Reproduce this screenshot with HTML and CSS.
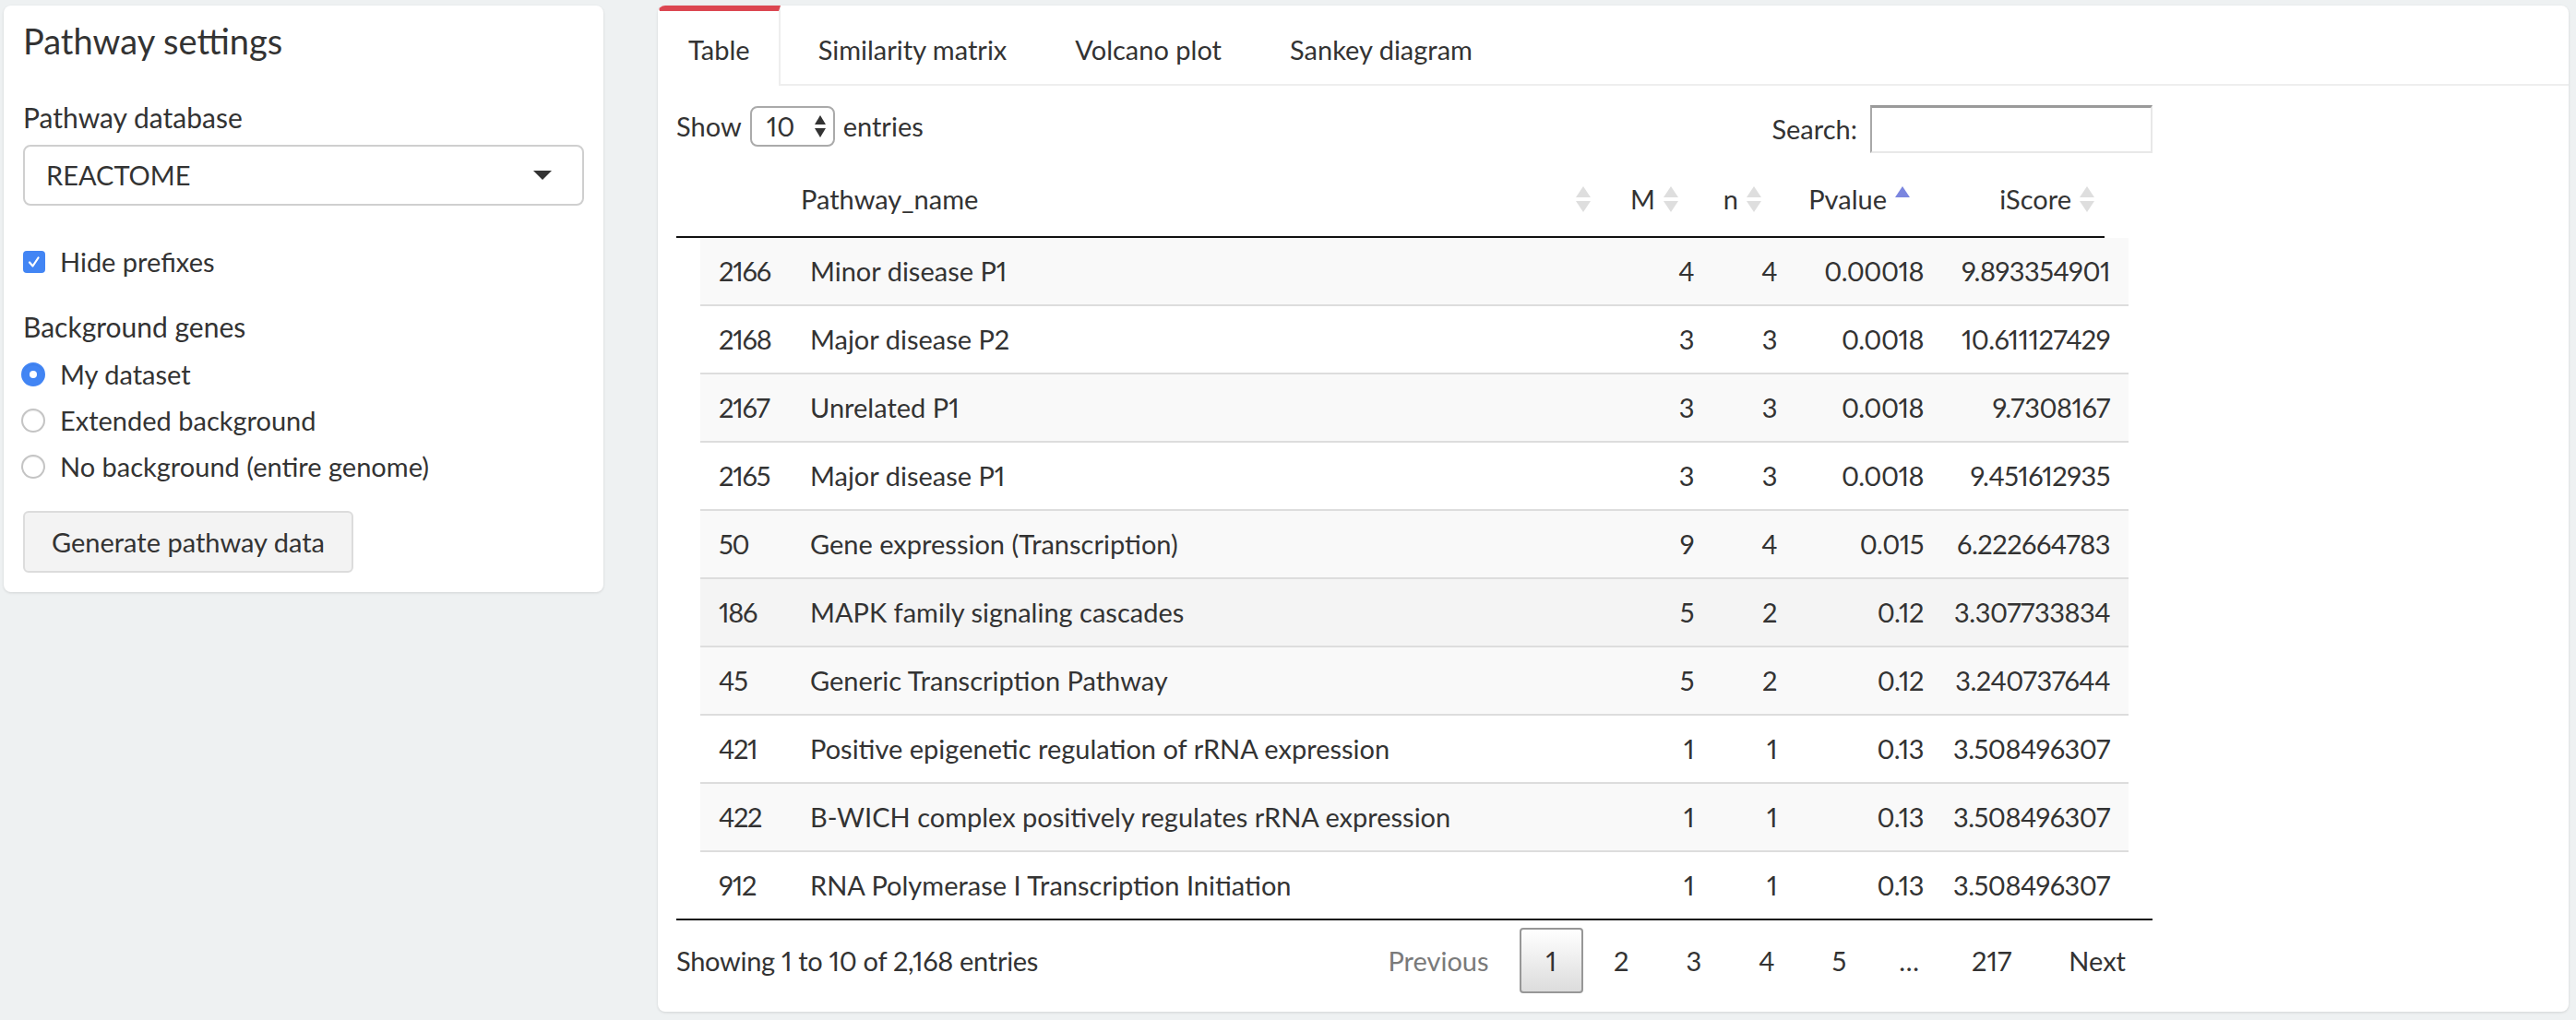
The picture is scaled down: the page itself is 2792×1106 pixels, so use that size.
FILE: index.html
```html
<!DOCTYPE html>
<html lang="en">
<head>
<meta charset="utf-8">
<title>Pathway analysis</title>
<link rel="stylesheet" href="styles.css">
</head>
<body>
<div class="page">
  <aside class="sidebar">
    <h2 class="side-title">Pathway settings</h2>
    <div class="field-label first">Pathway database</div>
    <div class="select-box">
      <span>REACTOME</span>
      <svg class="caret" width="20" height="10" viewBox="0 0 20 10"><polygon points="0,0 20,0 10,10" fill="#333"/></svg>
    </div>
    <div class="check-row">
      <span class="checkbox"><svg width="24" height="24" viewBox="0 0 24 24"><path d="M7 12.5 L10.5 16.5 L16.5 7.5" stroke="#fff" stroke-width="2.2" fill="none" stroke-linecap="round" stroke-linejoin="round"/></svg></span>
      <span>Hide prefixes</span>
    </div>
    <div class="field-label second">Background genes</div>
    <div class="radio-group">
      <div class="radio-row"><span class="radio checked"></span><span>My dataset</span></div>
      <div class="radio-row"><span class="radio"></span><span>Extended background</span></div>
      <div class="radio-row"><span class="radio"></span><span>No background (entire genome)</span></div>
    </div>
    <button class="btn">Generate pathway data</button>
  </aside>

  <main class="main-panel">
    <nav class="tabs">
      <div class="tab active">Table</div>
      <div class="tab">Similarity matrix</div>
      <div class="tab">Volcano plot</div>
      <div class="tab">Sankey diagram</div>
    </nav>
    <div class="tab-content">
      <div class="dt-wrapper">
        <div class="dt-controls">
          <div class="dt-length">
            <span>Show</span>
            <span class="len-select"><span>10</span><svg width="12" height="24" viewBox="0 0 12 24"><polygon points="6,0 12,10 0,10" fill="#333"/><polygon points="0,14 12,14 6,24" fill="#333"/></svg></span>
            <span>entries</span>
          </div>
          <div class="dt-filter">
            <span>Search:</span>
            <span class="search-input"></span>
          </div>
        </div>

        <div class="dt-head">
          <div class="th"></div>
          <div class="th sortable">Pathway_name</div>
          <div class="th num sortable">M</div>
          <div class="th num sortable">n</div>
          <div class="th num sorted-asc">Pvalue</div>
          <div class="th num sortable">iScore</div>
        </div>

        <div class="dt-scroll">
          <div class="dt-body">
            <div class="tr odd"><div class="td id">2166</div><div class="td">Minor disease P1</div><div class="td num">4</div><div class="td num">4</div><div class="td num">0.00018</div><div class="td num">9.893354901</div></div>
            <div class="tr"><div class="td id">2168</div><div class="td">Major disease P2</div><div class="td num">3</div><div class="td num">3</div><div class="td num">0.0018</div><div class="td num">10.611127429</div></div>
            <div class="tr odd"><div class="td id">2167</div><div class="td">Unrelated P1</div><div class="td num">3</div><div class="td num">3</div><div class="td num">0.0018</div><div class="td num">9.7308167</div></div>
            <div class="tr"><div class="td id">2165</div><div class="td">Major disease P1</div><div class="td num">3</div><div class="td num">3</div><div class="td num">0.0018</div><div class="td num">9.451612935</div></div>
            <div class="tr odd"><div class="td id">50</div><div class="td">Gene expression (Transcription)</div><div class="td num">9</div><div class="td num">4</div><div class="td num">0.015</div><div class="td num">6.222664783</div></div>
            <div class="tr hover"><div class="td id">186</div><div class="td">MAPK family signaling cascades</div><div class="td num">5</div><div class="td num">2</div><div class="td num">0.12</div><div class="td num">3.307733834</div></div>
            <div class="tr odd"><div class="td id">45</div><div class="td">Generic Transcription Pathway</div><div class="td num">5</div><div class="td num">2</div><div class="td num">0.12</div><div class="td num">3.240737644</div></div>
            <div class="tr"><div class="td id">421</div><div class="td">Positive epigenetic regulation of rRNA expression</div><div class="td num">1</div><div class="td num">1</div><div class="td num">0.13</div><div class="td num">3.508496307</div></div>
            <div class="tr odd"><div class="td id">422</div><div class="td">B-WICH complex positively regulates rRNA expression</div><div class="td num">1</div><div class="td num">1</div><div class="td num">0.13</div><div class="td num">3.508496307</div></div>
            <div class="tr"><div class="td id">912</div><div class="td">RNA Polymerase I Transcription Initiation</div><div class="td num">1</div><div class="td num">1</div><div class="td num">0.13</div><div class="td num">3.508496307</div></div>
          </div>
        </div>

        <div class="dt-footer">
          <div class="dt-info">Showing 1 to 10 of 2,168 entries</div>
          <div class="pagination">
            <span class="pg disabled">Previous</span>
            <span class="pg current">1</span>
            <span class="pg">2</span>
            <span class="pg">3</span>
            <span class="pg">4</span>
            <span class="pg">5</span>
            <span class="pg-ellipsis">…</span>
            <span class="pg">217</span>
            <span class="pg">Next</span>
          </div>
        </div>
      </div>
    </div>
  </main>
</div>
</body>
</html>
```

FILE: styles.css
```css
html, body {
  margin: 0;
  background: #eef1f2;
}

body {
  font-family: "Lato", "Open Sans", sans-serif;
  font-size: 29px;
  line-height: 42px;
  color: #333;
  min-height: 1106px;
  font-variant-numeric: proportional-nums;
}

.page {
  display: flex;
  align-items: flex-start;
  gap: 59px;
  padding: 6px 8px 0 4px;
}

/* ---------- Sidebar ---------- */
.sidebar {
  width: 650px;
  flex: none;
  box-sizing: border-box;
  padding: 15px 21px 21px;
  background: #fff;
  border-radius: 8px;
  box-shadow: 0 1px 3px rgba(0, 0, 0, 0.12);
  display: flex;
  flex-direction: column;
  align-items: flex-start;
}

.side-title {
  margin: 0;
  font-size: 38px;
  line-height: 46px;
  font-weight: 400;
}

.field-label { font-size: 30px; }
.field-label.first { margin-top: 39px; }
.field-label.second { margin-top: 28px; }

.select-box {
  margin-top: 9px;
  width: 100%;
  height: 66px;
  box-sizing: border-box;
  border: 2px solid #cfcfcf;
  border-radius: 8px;
  display: flex;
  align-items: center;
  justify-content: space-between;
  padding: 0 33px 0 23px;
}

.check-row {
  margin-top: 40px;
  display: flex;
  align-items: center;
  gap: 16px;
  height: 42px;
}

.checkbox {
  width: 24px;
  height: 24px;
  border-radius: 4px;
  background: #4285f4;
  display: flex;
}

.radio-group {
  margin-top: 6px;
  margin-left: -2px;
}

.radio-row {
  height: 50px;
  display: flex;
  align-items: center;
  gap: 16px;
}

.radio {
  width: 26px;
  height: 26px;
  box-sizing: border-box;
  border-radius: 50%;
  border: 2px solid #c4c4c4;
  background: #fff;
  box-shadow: inset 0 1px 1px rgba(0, 0, 0, 0.06);
  display: flex;
  align-items: center;
  justify-content: center;
}

.radio.checked {
  border-color: #4285f4;
  background: #4285f4;
}

.radio.checked::after {
  content: "";
  width: 8px;
  height: 8px;
  border-radius: 50%;
  background: #fff;
}

.btn {
  margin-top: 23px;
  width: 358px;
  height: 67px;
  box-sizing: border-box;
  border: 2px solid #dcdcdc;
  border-radius: 6px;
  background: #f3f3f3;
  font-family: inherit;
  font-size: 29px;
  color: #333;
  padding: 0 20px;
}

/* ---------- Main panel ---------- */
.main-panel {
  flex: 1;
  background: #fff;
  border-radius: 8px;
  box-shadow: 0 1px 3px rgba(0, 0, 0, 0.12);
  overflow: hidden;
}

.tabs {
  display: flex;
  border-bottom: 2px solid #eeeeee;
}

.tab {
  height: 85px;
  box-sizing: border-box;
  border-top: 6px solid transparent;
  border-left: 2px solid transparent;
  border-right: 2px solid transparent;
  padding: 21px 31px 16px;
  margin-right: 8px;
  white-space: nowrap;
}

.tab.active {
  border-top-color: #dc4651;
  border-right-color: #eeeeee;
  height: 87px;
  margin-bottom: -2px;
  background: #fff;
}

.tab-content {
  padding: 21px 20px 20px;
}

.dt-wrapper {
  width: 1600px;
}

.dt-controls {
  display: flex;
  justify-content: space-between;
  align-items: flex-start;
  height: 52px;
}

.dt-length {
  display: flex;
  align-items: center;
  gap: 9px;
  height: 44px;
  margin-top: 1px;
}

.len-select {
  width: 92px;
  height: 44px;
  box-sizing: border-box;
  border: 2px solid #aaa;
  border-radius: 8px;
  display: flex;
  align-items: center;
  justify-content: space-between;
  padding: 0 8px 0 16px;
}

.dt-filter {
  display: flex;
  align-items: center;
  gap: 14px;
  height: 52px;
}

.search-input {
  width: 306px;
  height: 52px;
  box-sizing: border-box;
  border-style: solid;
  border-width: 3px 2px 2px 2px;
  border-color: #9a9a9a #e8e8e8 #e8e8e8 #a8a8a8;
  background: #fff;
}

/* header */
.dt-head {
  margin-top: 10px;
  width: 1548px;
  display: grid;
  grid-template-columns: 115px 887px 95px 90px 161px 200px;
  border-bottom: 2px solid #111;
}

.th {
  position: relative;
  padding: 19px 36px 19px 20px;
  height: 80px;
  box-sizing: border-box;
  white-space: nowrap;
}

.num { text-align: right; }

.sortable::before,
.sortable::after,
.sorted-asc::before {
  content: "";
  position: absolute;
  right: 11px;
  width: 0;
  height: 0;
  border-left: 8px solid transparent;
  border-right: 8px solid transparent;
}

.sortable::before,
.sorted-asc::before {
  top: 26px;
  border-bottom: 12px solid #dedede;
}

.sortable::after {
  top: 42px;
  border-top: 12px solid #dedede;
}

.sorted-asc::before {
  border-bottom-color: #7b86df;
}

/* body */
.dt-scroll {
  padding-left: 26px;
  border-bottom: 2px solid #111;
}

.dt-body {
  width: 1548px;
}

.tr {
  display: grid;
  grid-template-columns: 99px 902px 96px 90px 159px 202px;
  border-top: 2px solid #dddddd;
}

.tr:first-child { border-top: none; }

.tr.odd { background: #f9f9f9; }
.tr.hover { background: #f4f4f4; }

.td {
  padding: 15px 20px;
  white-space: nowrap;
}

.td.id {
  letter-spacing: -1.2px;
}

.td.num {
  letter-spacing: -0.5px;
  display: flex;
  justify-content: flex-end;
}

/* footer */
.dt-footer {
  margin-top: 8px;
  height: 71px;
  display: flex;
  justify-content: space-between;
  align-items: center;
}

.dt-info {
  letter-spacing: -0.3px;
}

.pagination {
  display: flex;
  align-items: center;
  gap: 4px;
}

.pg {
  height: 71px;
  line-height: 67px;
  box-sizing: border-box;
  border: 2px solid transparent;
  border-radius: 4px;
  padding: 0 27px;
  color: #333;
}

.pg.disabled { color: #7a7a7a; }

.pg.current {
  border-color: #979797;
  background: linear-gradient(to bottom, #ffffff 0%, #dcdcdc 100%);
}

.pg-ellipsis {
  padding: 0 24px;
}
```
